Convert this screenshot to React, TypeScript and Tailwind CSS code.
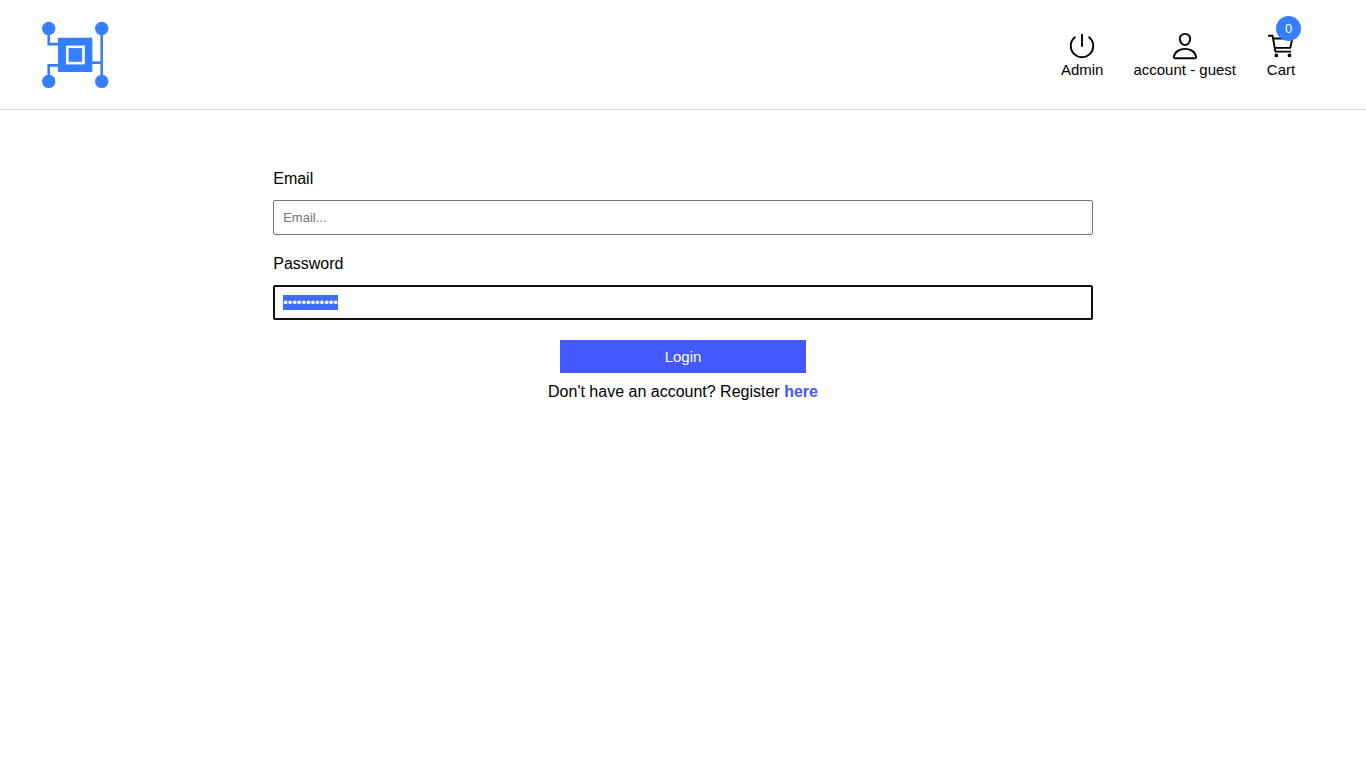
import { useEffect, useRef, useState } from "react";
import type { ReactNode } from "react";
import { IoCartOutline, IoPersonOutline, IoPowerOutline } from "react-icons/io5";

function Logo() {
  return (
    <svg viewBox="0 0 70 70" className="size-[70px]" role="img" aria-label="Home">
      <g fill="none" stroke="#357fff" strokeWidth="2.6">
        <path d="M8.7 8V24.1H19" />
        <path d="M8.7 61V45.4H19" />
        <path d="M61.7 8V61" />
        <path d="M52 42.7H61.7" />
      </g>
      <g fill="#357fff">
        <circle cx="8.7" cy="8.4" r="6.7" />
        <circle cx="61.7" cy="8.4" r="6.7" />
        <circle cx="8.7" cy="61.4" r="6.7" />
        <circle cx="61.7" cy="61.4" r="6.7" />
        <rect x="18" y="17.7" width="34.4" height="34.4" rx="0.8" />
      </g>
      <rect x="26" y="25.6" width="18.8" height="18.8" fill="#fff" />
      <rect x="28.6" y="28.1" width="13.5" height="13.7" fill="#357fff" />
    </svg>
  );
}

function NavItem({ label, icon, badge }: { label: string; icon: ReactNode; badge?: number }) {
  return (
    <a href="#" className="relative flex flex-col items-center text-[15px] leading-[17px]">
      {icon}
      <span>{label}</span>
      {badge !== undefined && (
        <span className="absolute -top-[15px] left-2.5 flex size-[25px] items-center justify-center rounded-full bg-[#357fff] text-[13px] text-white">
          {badge}
        </span>
      )}
    </a>
  );
}

const fieldClass =
  "h-[35px] w-full rounded-[2px] border border-[#767676] bg-white px-[9px] text-[13px] placeholder:text-[#757575] selection:bg-[#3f6bff] selection:text-white focus:outline-2 focus:-outline-offset-2 focus:outline-[#101010]";

export default function App() {
  const [email, setEmail] = useState("");
  const [password, setPassword] = useState("passwordpass");
  const passwordRef = useRef<HTMLInputElement>(null);

  useEffect(() => {
    passwordRef.current?.focus();
    passwordRef.current?.select();
  }, []);

  return (
    <div className="bg-white font-['Liberation_Sans',Arial,sans-serif] text-base text-black">
      <header className="flex h-[110px] items-center justify-between border-b border-[#dddddd] pr-[70px] pl-10">
        <a href="#" className="block">
          <Logo />
        </a>
        <nav className="flex gap-[30px]">
          <NavItem label="Admin" icon={<IoPowerOutline size={30} />} />
          <NavItem label="account - guest" icon={<IoPersonOutline size={30} />} />
          <NavItem label="Cart" icon={<IoCartOutline size={30} />} badge={0} />
        </nav>
      </header>
      <main>
        <form
          className="mx-auto flex w-3/5 flex-col pt-[60px]"
          onSubmit={(event) => event.preventDefault()}
        >
          <label htmlFor="email" className="mb-3 leading-[18px]">
            Email
          </label>
          <input
            id="email"
            type="email"
            placeholder="Email..."
            value={email}
            onChange={(event) => setEmail(event.target.value)}
            className={fieldClass}
          />
          <label htmlFor="password" className="mt-5 mb-3 leading-[18px]">
            Password
          </label>
          <input
            id="password"
            ref={passwordRef}
            type="password"
            value={password}
            onChange={(event) => setPassword(event.target.value)}
            className={fieldClass}
          />
          <button
            type="submit"
            className="mt-5 w-[30%] self-center bg-[#4359ff] py-2 text-[15px] leading-[17px] text-white"
          >
            Login
          </button>
          <p className="mt-2.5 text-center leading-[18px]">
            Don't have an account? Register{" "}
            <a href="#" className="font-bold text-[#4359ff]">
              here
            </a>
          </p>
        </form>
      </main>
    </div>
  );
}
